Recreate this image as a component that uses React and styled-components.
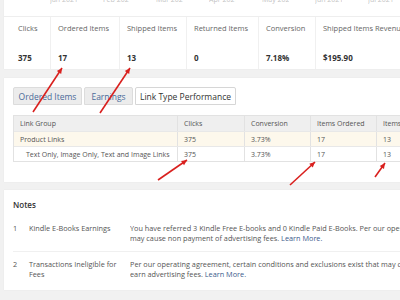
import React from "react";
import styled, { createGlobalStyle } from "styled-components";

const GlobalStyle = createGlobalStyle`
  body {
    margin: 0;
    background: #f1f1f1;
    font-family: "Open Sans", "DejaVu Sans", sans-serif;
    color: #555;
  }
`;

const Page = styled.div`
  position: relative;
  width: 400px;
  height: 300px;
  overflow: hidden;
  padding-left: 4px;
  box-sizing: border-box;
  display: flex;
  flex-direction: column;
  gap: 8px;
`;

const Card = styled.div`
  background: #fff;
  width: 410px;
  flex-shrink: 0;
  box-shadow: 0 0 1px rgba(0, 0, 0, 0.08);
`;

const TopRow = styled.div`
  display: flex;
  height: 16px;
  overflow: hidden;
  border-bottom: 1px solid #eee;
  padding-left: 46px;
  gap: 26px;
`;

const Stub = styled.span`
  font-size: 7px;
  color: #c4c4c4;
  line-height: 7px;
  margin-top: -4px;
  width: 27px;
  white-space: nowrap;
  overflow: hidden;
`;

const StatRow = styled.div`
  display: flex;
  height: 52px;
`;

const Stat = styled.div`
  width: ${(p) => p.$w}px;
  flex-shrink: 0;
  box-sizing: border-box;
  padding: 6px 0 0 ${(p) => p.$pad || 7}px;
  border-left: ${(p) => (p.$first ? "none" : "1px solid #f0f0f0")};
  display: flex;
  flex-direction: column;
  white-space: nowrap;
  overflow: hidden;
`;

const StatLabel = styled.div`
  font-size: 7.5px;
  color: #666;
  height: 29px;
`;

const StatValue = styled.div`
  font-size: 8px;
  font-weight: 700;
  color: #333;
`;

const PerfCard = styled(Card)`
  margin-top: 1px;
  padding: 9px 0 20px 9px;
`;

const Tabs = styled.div`
  display: flex;
  gap: 2px;
  height: 18px;
`;

const Tab = styled.div`
  width: ${(p) => p.$w}px;
  box-sizing: border-box;
  font-size: 8.5px;
  display: flex;
  align-items: center;
  justify-content: center;
  border: 1px solid ${(p) => (p.$active ? "#d6d6d6" : "#dcdcdc")};
  border-radius: 2px 2px 0 0;
  background: ${(p) => (p.$active ? "#fff" : "#ececec")};
  color: ${(p) => (p.$active ? "#333" : "#4a6a99")};
  white-space: nowrap;
`;

const Table = styled.div`
  margin-top: 10px;
  border: 1px solid #e2e2e2;
  border-right: none;
`;

const Row = styled.div`
  display: grid;
  grid-template-columns: 163px 67px 66px 66px 1fr;
  height: 15px;
  background: ${(p) => p.$bg || "#fff"};
  border-top: ${(p) => (p.$first ? "none" : "1px solid #e8e8e8")};
  box-sizing: border-box;
`;

const Cell = styled.div`
  font-size: 7px;
  color: #555;
  display: flex;
  align-items: center;
  padding-left: ${(p) => p.$indent || 6}px;
  border-left: ${(p) => (p.$first ? "none" : "1px solid #e2e2e2")};
  white-space: nowrap;
  overflow: hidden;
`;

const NotesCard = styled(Card)`
  padding: 9px 0 8px 9px;
  height: 100px;
  box-sizing: border-box;
`;

const NotesTitle = styled.div`
  font-size: 8px;
  font-weight: 600;
  color: #333;
  margin-bottom: 13px;
`;

const Note = styled.div`
  display: grid;
  grid-template-columns: 16px 101px 1fr;
  font-size: 7.3px;
  line-height: 10px;
  color: #555;
  padding-bottom: 8px;
  margin-bottom: 7px;
  border-bottom: ${(p) => (p.$last ? "none" : "1px solid #f0f0f0")};
`;

const NoteText = styled.div`
  white-space: nowrap;
  overflow: hidden;
`;

const Link = styled.span`
  color: #3a5a8c;
`;

const Arrows = styled.svg`
  position: absolute;
  left: 0;
  top: 0;
  pointer-events: none;
`;

const arrows = [
  [33, 112, 62, 68],
  [100, 113, 130, 68],
  [158, 180, 187, 160],
  [290, 185, 315, 162],
  [375, 177, 385, 163],
];

function Arrow({ x1, y1, x2, y2 }) {
  const a = Math.atan2(y2 - y1, x2 - x1);
  const len = 6;
  const spread = 0.45;
  const p1 = [x2 - len * Math.cos(a - spread), y2 - len * Math.sin(a - spread)];
  const p2 = [x2 - len * Math.cos(a + spread), y2 - len * Math.sin(a + spread)];
  return (
    <g>
      <line x1={x1} y1={y1} x2={x2} y2={y2} stroke="#d9201e" strokeWidth="1.6" />
      <polygon points={`${x2},${y2} ${p1[0]},${p1[1]} ${p2[0]},${p2[1]}`} fill="#d9201e" />
    </g>
  );
}

export default function App() {
  const stats = [
    { label: "Clicks", value: "375", w: 46, pad: 14 },
    { label: "Ordered Items", value: "17", w: 69 },
    { label: "Shipped Items", value: "13", w: 67 },
    { label: "Returned Items", value: "0", w: 72 },
    { label: "Conversion", value: "7.18%", w: 57 },
    { label: "Shipped Items Revenue", value: "$195.90", w: 100 },
  ];
  return (
    <>
      <GlobalStyle />
      <Page>
        <Card>
          <TopRow>
            {["Jan 2021", "Feb 2021", "Mar 2021", "Apr 2021", "May 2021", "Jun 2021", "Jul 2021"].map((t) => (
              <Stub key={t}>{t}</Stub>
            ))}
          </TopRow>
          <StatRow>
            {stats.map((s, i) => (
              <Stat key={s.label} $w={s.w} $pad={s.pad} $first={i === 0}>
                <StatLabel>{s.label}</StatLabel>
                <StatValue>{s.value}</StatValue>
              </Stat>
            ))}
          </StatRow>
        </Card>

        <PerfCard>
          <Tabs>
            <Tab $w={69}>Ordered Items</Tab>
            <Tab $w={49}>Earnings</Tab>
            <Tab $w={101} $active>Link Type Performance</Tab>
          </Tabs>
          <Table>
            <Row $bg="#efefef" $first>
              <Cell $first>Link Group</Cell>
              <Cell>Clicks</Cell>
              <Cell>Conversion</Cell>
              <Cell>Items Ordered</Cell>
              <Cell>Items Shipped</Cell>
            </Row>
            <Row $bg="#fdf8ec">
              <Cell $first>Product Links</Cell>
              <Cell>375</Cell>
              <Cell>3.73%</Cell>
              <Cell>17</Cell>
              <Cell>13</Cell>
            </Row>
            <Row>
              <Cell $first $indent={12}>Text Only, Image Only, Text and Image Links</Cell>
              <Cell>375</Cell>
              <Cell>3.73%</Cell>
              <Cell>17</Cell>
              <Cell>13</Cell>
            </Row>
          </Table>
        </PerfCard>

        <NotesCard>
          <NotesTitle>Notes</NotesTitle>
          <Note>
            <span>1</span>
            <span>Kindle E-Books Earnings</span>
            <NoteText>
              You have referred 3 Kindle Free E-books and 0 Kindle Paid E-Books. Per our operating agreement,
              <br />
              may cause non payment of advertising fees. <Link>Learn More.</Link>
            </NoteText>
          </Note>
          <Note $last>
            <span>2</span>
            <span>Transactions Ineligible for Fees</span>
            <NoteText>
              Per our operating agreement, certain conditions and exclusions exist that may cause you not to
              <br />
              earn advertising fees. <Link>Learn More.</Link>
            </NoteText>
          </Note>
        </NotesCard>

        <Arrows width="400" height="300">
          {arrows.map(([x1, y1, x2, y2], i) => (
            <Arrow key={i} x1={x1} y1={y1} x2={x2} y2={y2} />
          ))}
        </Arrows>
      </Page>
    </>
  );
}
